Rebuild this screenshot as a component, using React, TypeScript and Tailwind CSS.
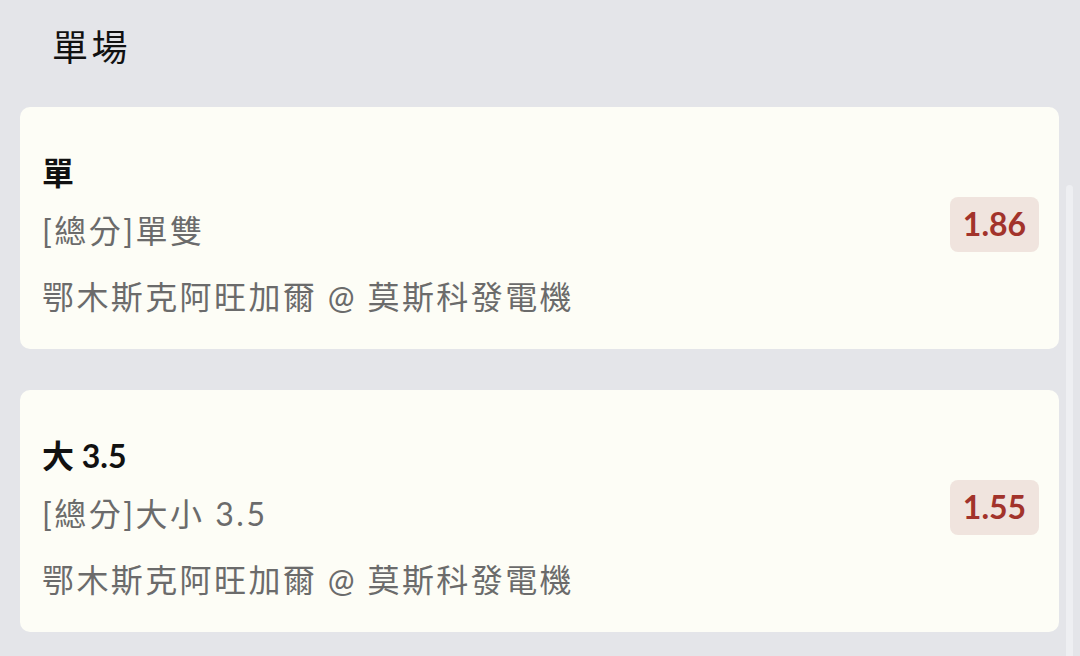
const bets = [
  { pick: '單', market: '[總分]單雙', match: '鄂木斯克阿旺加爾 @ 莫斯科發電機', odds: '1.86' },
  { pick: '大 3.5', market: '[總分]大小 3.5', match: '鄂木斯克阿旺加爾 @ 莫斯科發電機', odds: '1.55' },
];

export default function App() {
  return (
    <div
      className="relative w-[1080px] h-[656px] overflow-hidden bg-[#e4e5e9]"
      style={{ fontFamily: 'Lato, "Noto Sans CJK TC", sans-serif' }}
    >
      {/* scrollbar track */}
      <div className="absolute left-[1066px] top-[185px] w-[7px] h-[480px] rounded-full bg-[#eeeff2]" />

      <h1 className="pl-[52px] pt-[23px] h-[107px] text-[36px] leading-[48px] tracking-[3.5px] text-[#111]">單場</h1>

      <div className="flex flex-col gap-[41px] pl-[20px] pr-[21px] w-[1080px]">
        {bets.map((b) => (
          <div key={b.odds} className="flex items-center justify-between h-[242px] rounded-[10px] bg-[#fdfdf6] pl-[22px] pr-[20px]">
            <div className="flex flex-col pt-[14px]">
              <div className="text-[32px] leading-[40px] font-bold text-[#111]">{b.pick}</div>
              <div className="mt-[18px] text-[32px] leading-[40px] tracking-[2.5px] text-[#6b6b6b]">{b.market}</div>
              <div className="mt-[26px] text-[32px] leading-[40px] tracking-[2.4px] text-[#6b6b6b]">{b.match}</div>
            </div>
            <div className="mb-[8px] flex items-center justify-center h-[55px] w-[89px] rounded-[8px] bg-[#f0e4de] text-[32px] font-bold text-[#a2332b]">
              {b.odds}
            </div>
          </div>
        ))}
      </div>
    </div>
  );
}
